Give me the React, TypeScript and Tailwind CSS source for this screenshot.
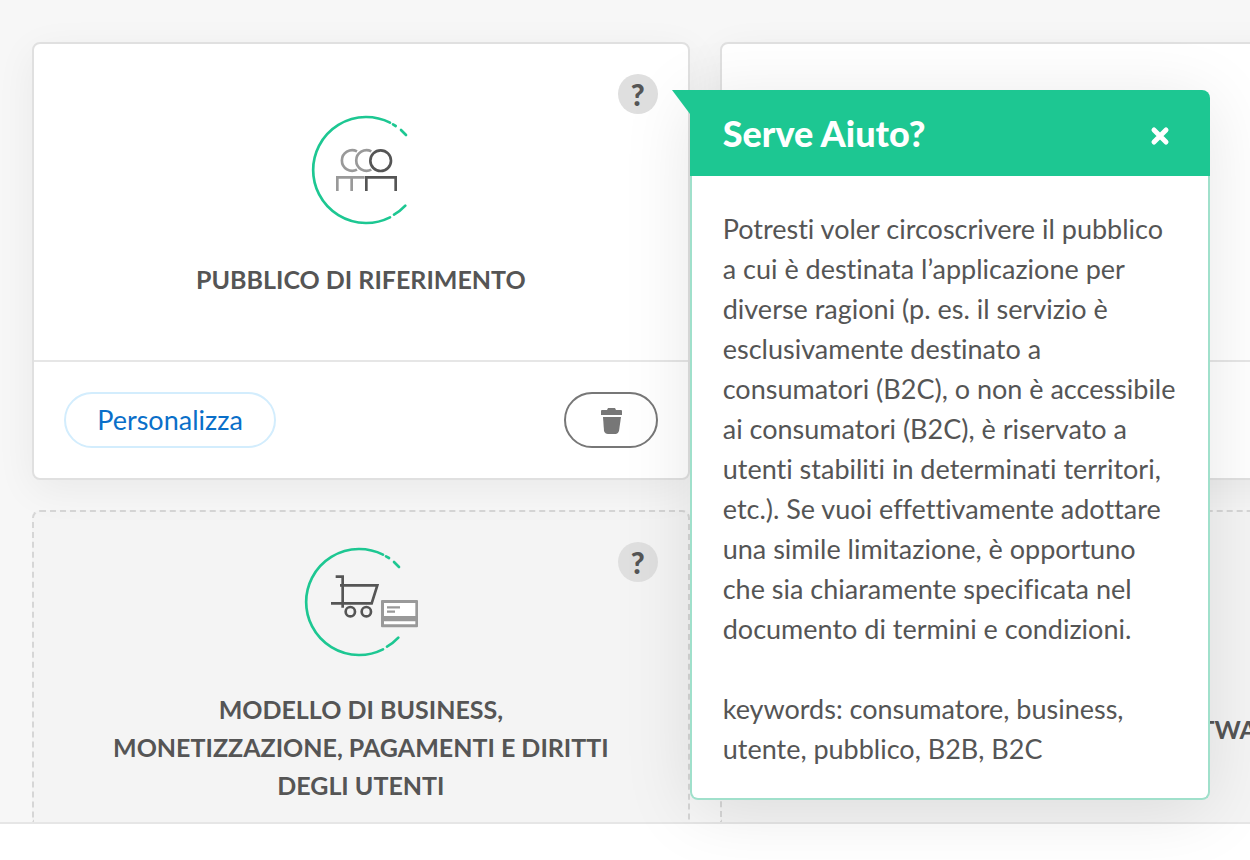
import { ReactNode } from 'react';

interface ServiceCardProps {
  title: string;
  icon: ReactNode;
}

function HelpButton() {
  return (
    <button
      type="button"
      aria-label="Aiuto"
      className="absolute right-[30px] top-[30px] flex h-10 w-10 items-center justify-center rounded-full bg-[#dfdfdf] text-[30px] leading-10 font-black text-[#555]"
    >
      ?
    </button>
  );
}

function AudienceIcon() {
  return (
    <svg width="100" height="110" viewBox="33 30 300 330" fill="none" aria-hidden="true">
      <g stroke="#1dc792" strokeWidth="8" strokeLinecap="round">
        <path d="M270 53A159 159 0 1 0 270 337" />
        <path d="M279 58L287 63M303 75L318 90M282 329Q301 318 316 302" />
      </g>
      <g stroke="#999" strokeWidth="8">
        <path d="M171 139A31 31 0 1 0 171 194M214 139A31 31 0 1 0 214 194" />
        <path d="M112 258V217H194M155 217V258" />
      </g>
      <g stroke="#555" strokeWidth="8">
        <circle cx="242" cy="167" r="31" />
        <path d="M199 258V217H287V258" />
      </g>
    </svg>
  );
}

function BusinessIcon() {
  return (
    <svg width="116" height="110" viewBox="24 30 348 330" fill="none" aria-hidden="true">
      <g stroke="#1dc792" strokeWidth="8" strokeLinecap="round">
        <path d="M264 53A159 159 0 1 0 264 337" />
        <path d="M273 58L282 63M297 75L312 90M276 329Q295 318 310 302" />
      </g>
      <g stroke="#555" strokeWidth="8">
        <path d="M122 119H143V212M135 145H247L230 199H108" />
        <circle cx="166" cy="224" r="14" />
        <circle cx="214" cy="224" r="14" />
      </g>
      <rect x="258" y="189" width="111" height="82" rx="3" fill="#999" />
      <path d="M267 198H361V237H267ZM267 253H361V262H267Z" fill="#fff" />
      <path d="M276 211H315M276 224H300" stroke="#999" strokeWidth="7" />
    </svg>
  );
}

function TrashIcon() {
  return (
    <svg width="22" height="28" viewBox="0 0 22 28" fill="#777" aria-hidden="true">
      <path d="M2 4H7L8 2H15L16 4H21Q22 4 22 5V9H1V5Q1 4 2 4Z" />
      <path d="M3 11H21L19 25Q18 28 16 28H8Q5 28 4 25Z" />
    </svg>
  );
}

function HelpPopover() {
  return (
    <div
      role="dialog"
      aria-labelledby="help-title"
      className="absolute left-full top-12 z-10 w-[520px] rounded-lg rounded-tl-none shadow-[0_10px_70px_rgba(0,0,0,0.1)]"
    >
      <div className="absolute right-full top-0 border-t-[24px] border-l-[18px] border-t-[#1dc792] border-l-transparent" />
      <div className="flex h-[86px] items-center justify-between rounded-tr-lg bg-[#1dc792] pr-10 pl-[33px] text-white">
        <h2 id="help-title" className="text-[36px] leading-10 font-black">
          Serve Aiuto?
        </h2>
        <button type="button" aria-label="Chiudi" className="mt-1.5">
          <svg width="20" height="20" viewBox="0 0 20 20" stroke="currentColor" strokeWidth="5" strokeLinecap="round">
            <path d="M4 4L16 16M16 4L4 16" />
          </svg>
        </button>
      </div>
      <div className="rounded-b-lg border-2 border-t-0 border-[#a0e0cb] bg-white pt-[33px] pr-6 pb-[29px] pl-[31px] text-[27px] leading-10 whitespace-nowrap">
        <p>
          Potresti voler circoscrivere il pubblico
          <br />
          a cui è destinata l’applicazione per
          <br />
          diverse ragioni (p. es. il servizio è
          <br />
          esclusivamente destinato a
          <br />
          consumatori (B2C), o non è accessibile
          <br />
          ai consumatori (B2C), è riservato a
          <br />
          utenti stabiliti in determinati territori,
          <br />
          etc.). Se vuoi effettivamente adottare
          <br />
          una simile limitazione, è opportuno
          <br />
          che sia chiaramente specificata nel
          <br />
          documento di termini e condizioni.
        </p>
        <p className="mt-10">
          keywords: consumatore, business,
          <br />
          utente, pubblico, B2B, B2C
        </p>
      </div>
    </div>
  );
}

function ActiveCard({ title, icon }: ServiceCardProps) {
  return (
    <article className="relative rounded-lg border-2 border-[#e0e0e0] bg-white shadow-[0_10px_40px_rgba(0,0,0,0.06)]">
      <HelpButton />
      <div className="flex flex-col items-center border-b-2 border-[#e6e6e6] pt-[71px] pb-[62px]">
        {icon}
        <h3 className="mt-[35px] text-[25px] leading-[38px] font-bold">{title}</h3>
      </div>
      <div className="flex items-center justify-between p-[30px]">
        <button type="button" className="h-14 w-[212px] rounded-full border-2 border-[#d3edfd] text-[27px] text-[#0a6fc9]">
          Personalizza
        </button>
        <button
          type="button"
          aria-label="Elimina"
          className="flex h-14 w-[94px] items-center justify-center rounded-full border-2 border-[#777]"
        >
          <TrashIcon />
        </button>
      </div>
    </article>
  );
}

function SuggestedCard({ title, icon }: ServiceCardProps) {
  return (
    <article className="relative flex flex-col items-center rounded-t-lg border-2 border-b-0 border-dashed border-[#d6d6d6] bg-[#f4f4f4] px-[72px] pt-[35px] pb-[18px]">
      <HelpButton />
      {icon}
      <h3 className="mt-[33px] text-center text-[25px] leading-[38px] font-bold">{title}</h3>
    </article>
  );
}

export default function App() {
  return (
    <div className="min-h-screen overflow-x-clip bg-white font-['Lato',sans-serif] text-[#555] [font-variant-ligatures:none]">
      <main className="grid grid-cols-[54%_54%] gap-[30px] bg-[#f7f7f7] pt-[42px] pl-8">
        <div className="relative z-10">
          <ActiveCard title="PUBBLICO DI RIFERIMENTO" icon={<AudienceIcon />} />
          <HelpPopover />
        </div>
        <article className="flex flex-col rounded-lg border-2 border-[#e0e0e0] bg-white shadow-[0_10px_40px_rgba(0,0,0,0.06)]">
          <div className="flex-1" />
          <div className="h-[118px] border-t-2 border-[#e6e6e6]" />
        </article>
        <SuggestedCard
          title="MODELLO DI BUSINESS, MONETIZZAZIONE, PAGAMENTI E DIRITTI DEGLI UTENTI"
          icon={<BusinessIcon />}
        />
        <article className="rounded-t-lg border-2 border-b-0 border-dashed border-[#d6d6d6] bg-[#f4f4f4] pt-[198px] pr-[88px] text-right">
          <h3 className="text-[25px] leading-[38px] font-bold">SOFTWARE</h3>
        </article>
      </main>
      <footer className="border-t-2 border-[#e6e6e6] bg-white" />
    </div>
  );
}
